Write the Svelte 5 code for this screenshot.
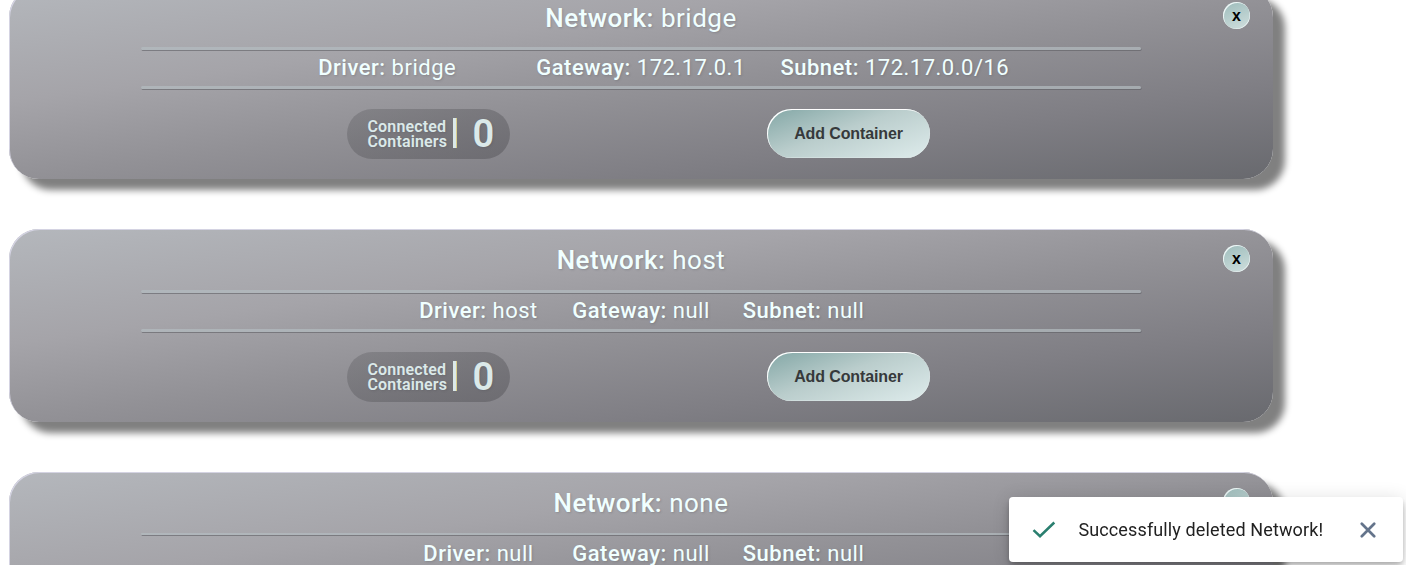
<script>
  const networks = [
    { name: 'bridge', driver: 'bridge', gateway: '172.17.0.1', subnet: '172.17.0.0/16', count: 0 },
    { name: 'host', driver: 'host', gateway: 'null', subnet: 'null', count: 0 },
    { name: 'none', driver: 'null', gateway: 'null', subnet: 'null', count: 0 }
  ];
</script>

<main>
  <div class="list">
    {#each networks as network}
      <section class="card">
        <button class="remove" aria-label="Delete network">x</button>
        <h2><b>Network:</b> {network.name}</h2>
        <div class="rule"></div>
        <div class="info">
          <span><b>Driver:</b> {network.driver}</span>
          <span><b>Gateway:</b> {network.gateway}</span>
          <span><b>Subnet:</b> {network.subnet}</span>
        </div>
        <div class="rule"></div>
        <div class="actions">
          <div class="connected">
            <span class="label">Connected<br />Containers</span>
            <span class="bar"></span>
            <span class="count">{network.count}</span>
          </div>
          <button class="add">Add Container</button>
        </div>
      </section>
    {/each}
  </div>

  <div class="toast">
    <svg class="check" width="26" height="26" viewBox="0 0 26 26"><path d="M2.5 13.2 9 19.2 23.3 5.5" /></svg>
    <span class="message">Successfully deleted Network!</span>
    <svg class="close" width="16" height="16" viewBox="0 0 16 16"><path d="M1.8 1.8 14.2 14.2M14.2 1.8 1.8 14.2" /></svg>
  </div>
</main>

<style>
  :global(body) {
    margin: 0;
    background: #fff;
    overflow: hidden;
  }
  main {
    height: 565px;
    overflow: hidden;
    font-family: Roboto, sans-serif;
  }
  .list {
    display: flex;
    flex-direction: column;
    gap: 50px;
    width: 1264px;
    margin: -13.4px 0 0 9px;
  }
  .card {
    position: relative;
    box-sizing: border-box;
    flex: none;
    height: 192.75px;
    padding-top: 16px;
    border-radius: 30px;
    display: flex;
    flex-direction: column;
    align-items: center;
    color: azure;
    background: linear-gradient(172deg, #b4b7bc 0%, #a5a4a9 31%, #929196 52%, #7f7e84 75%, #68696e 100%);
    box-shadow: inset 1px 1px 0 #d4d3e2, 12px 11px 7px #808080;
    text-shadow: 1px 1px 2px rgba(70, 70, 80, 0.25);
  }
  b {
    font-weight: 500;
  }
  h2 {
    margin: 0;
    font-size: 26px;
    line-height: 31px;
    font-weight: 400;
    letter-spacing: 0.5px;
  }
  .rule {
    width: 1000px;
    height: 2.6px;
    flex: none;
    border-radius: 2px;
    background: rgba(180, 188, 193, 0.7);
    box-shadow: 0.5px 1px 0 rgba(95, 95, 100, 0.6);
  }
  h2 + .rule {
    margin-top: 13.7px;
  }
  .info {
    box-sizing: border-box;
    display: inline-grid;
    grid-template-columns: repeat(3, 1fr);
    column-gap: 25px;
    height: 36.4px;
    padding-top: 0.3px;
    line-height: 35px;
    font-size: 22px;
    letter-spacing: 0.5px;
    text-align: center;
    white-space: nowrap;
  }
  .actions {
    display: flex;
    gap: 257px;
    margin: 20.1px 5px 0 0;
  }
  .connected {
    box-sizing: border-box;
    width: 163px;
    height: 50px;
    padding-left: 20.5px;
    border-radius: 25px;
    display: flex;
    align-items: center;
    color: #dbe9e9;
    background: linear-gradient(160deg, rgba(100, 100, 104, 0.4), rgba(92, 91, 96, 0.6));
  }
  .label {
    flex: none;
    width: 85.5px;
    font-size: 16px;
    line-height: 15px;
    font-weight: 600;
    letter-spacing: 0.15px;
  }
  .bar {
    flex: none;
    width: 4px;
    height: 30px;
    margin-top: -2px;
    background: linear-gradient(90deg, #dbe9e9 70%, #d9cf8e 70%);
  }
  .count {
    margin-left: 15.5px;
    font-size: 38px;
    font-weight: 600;
    line-height: 48px;
  }
  button {
    box-sizing: border-box;
    padding: 0;
    font-family: "Liberation Sans", Arial, sans-serif;
    font-weight: 700;
    font-size: 16px;
    border: 0;
  }
  .add {
    width: 163px;
    height: 49px;
    padding-top: 1px;
    border-radius: 25px;
    color: #36393b;
    letter-spacing: -0.12px;
    background: linear-gradient(160deg, #89abaa 5%, #bacdcc 45%, #dbe9e9 95%);
    box-shadow: inset 1px 1px 0 #fff, inset -0.5px -0.5px 0 #dfe9e9;
  }
  .remove {
    position: absolute;
    top: 15.7px;
    right: 23px;
    width: 27px;
    height: 27px;
    border-radius: 50%;
    color: #000;
    background: linear-gradient(160deg, #9dbcbb, #d0dfde);
    box-shadow: inset 1px 1px 0 #eef6f6, inset -0.5px -0.5px 0 #eef6f6;
    line-height: 25px;
  }
  .toast {
    position: fixed;
    left: 1009px;
    top: 497px;
    box-sizing: border-box;
    width: 394px;
    height: 65px;
    padding: 0 27px 0 22px;
    display: flex;
    align-items: center;
    border-radius: 4px;
    background: #fff;
    color: #212121;
    box-shadow: 0 3px 5px -1px rgba(0, 0, 0, 0.2), 0 6px 10px rgba(0, 0, 0, 0.14), 0 1px 18px rgba(0, 0, 0, 0.12);
  }
  .check {
    fill: none;
    stroke: #2a7f6f;
    stroke-width: 2.5;
  }
  .message {
    margin-left: 21.4px;
    flex: 1;
    font-size: 18px;
    letter-spacing: 0.13px;
    white-space: nowrap;
  }
  .close {
    fill: none;
    stroke: #64748b;
    stroke-width: 2.7;
    stroke-linecap: round;
  }
</style>
